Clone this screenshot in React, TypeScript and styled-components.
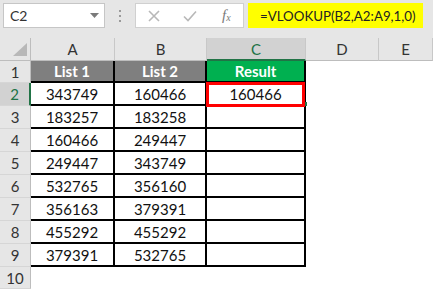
import React from "react";
import styled, { createGlobalStyle, css } from "styled-components";

const GlobalStyle = createGlobalStyle`
  html, body { margin: 0; padding: 0; background: #ffffff; overflow: hidden; }
  body { font-family: Lato, "Open Sans", sans-serif; }
`;

const Page = styled.div`
  width: 433px;
  height: 289px;
  display: flex;
  flex-direction: column;
  overflow: hidden;
  background: #ffffff;
`;

const Toolbar = styled.div`
  height: 38px;
  flex: none;
  box-sizing: border-box;
  background: #e6e6e6;
  display: flex;
  align-items: flex-start;
  padding: 3px 10px 0 3px;
`;

const NameBox = styled.div`
  width: 102px;
  height: 25px;
  box-sizing: border-box;
  background: #fff;
  border: 1px solid #c6c6c6;
  display: flex;
  align-items: center;
  justify-content: space-between;
  padding: 0 5px 0 6px;
  font-size: 14px;
  color: #333;
`;

const Dots = styled.div`
  width: 30px;
  height: 25px;
  display: flex;
  flex-direction: column;
  align-items: center;
  justify-content: center;
  gap: 3px;
  span {
    width: 2px;
    height: 2px;
    background: #9a9a9a;
  }
`;

const FxGroup = styled.div`
  width: 109px;
  height: 25px;
  box-sizing: border-box;
  background: #fff;
  border: 1px solid #d0d0d0;
  display: flex;
  align-items: center;
  padding-left: 12px;
  gap: 23px;
  color: #b4b4b4;
`;

const FxText = styled.span`
  font-family: "Liberation Serif", serif;
  font-style: italic;
  font-size: 15px;
  color: #7a7a7a;
  margin-left: 2px;
  sub {
    font-size: 10px;
    vertical-align: -1px;
  }
`;

const FormulaInput = styled.div`
  margin-left: 4px;
  flex: 1;
  height: 25px;
  background: #ffff00;
  display: flex;
  align-items: center;
  padding-left: 12px;
  font-size: 13.3px;
  color: #222;
`;

const Sheet = styled.div`
  flex: 1;
  display: grid;
  grid-template-columns: 31px 84px 92px 99px 73px 1fr;
  grid-template-rows: 23px 22px repeat(8, 23px) 22px;
  font-size: 15px;
`;

const Corner = styled.div`
  background: #e6e6e6;
  border-right: 1px solid #bdbdbd;
  border-bottom: 1px solid #bdbdbd;
  display: flex;
  align-items: flex-end;
  justify-content: flex-end;
  padding: 0 3px 4px 0;
  box-sizing: border-box;
`;

const ColHeader = styled.div<{ $active?: boolean }>`
  background: #e6e6e6;
  border-right: 1px solid #c8c8c8;
  border-bottom: 1px solid #bdbdbd;
  box-sizing: border-box;
  display: flex;
  align-items: center;
  justify-content: center;
  color: #333;
  ${(p) =>
    p.$active &&
    css`
      background: #d2d2d2;
      color: #217346;
      border-bottom: 2px solid #217346;
    `}
`;

const RowHeader = styled.div<{ $active?: boolean }>`
  background: #e6e6e6;
  border-right: 1px solid #bdbdbd;
  border-bottom: 1px solid #d6d6d6;
  box-sizing: border-box;
  display: flex;
  align-items: center;
  justify-content: center;
  color: #333;
  ${(p) =>
    p.$active &&
    css`
      background: #d2d2d2;
      color: #217346;
      border-right: 2px solid #217346;
    `}
`;

type Tone = "plain" | "gray" | "green" | "empty";

const Cell = styled.div<{ $tone: Tone; $selected?: boolean }>`
  position: relative;
  box-sizing: border-box;
  display: flex;
  align-items: center;
  justify-content: center;
  color: #111;
  background: #fff;
  border-right: 2px solid #000;
  border-bottom: 2px solid #000;
  ${(p) =>
    p.$selected &&
    css`
      z-index: 1;
    `}
  ${(p) =>
    p.$tone === "gray" &&
    css`
      background: #7f7f7f;
      color: #fff;
      font-weight: 700;
    `}
  ${(p) =>
    p.$tone === "green" &&
    css`
      background: #00b050;
      color: #fff;
      font-weight: 700;
    `}
  ${(p) =>
    p.$tone === "empty" &&
    css`
      border: none;
    `}
`;

const Highlight = styled.div`
  position: absolute;
  left: -1px;
  top: -1px;
  right: -1px;
  bottom: -3px;
  border: 3px solid #ff0000;
  z-index: 2;
  pointer-events: none;
`;

const FillHandle = styled.div`
  position: absolute;
  right: -3px;
  bottom: -2px;
  width: 4px;
  height: 4px;
  background: #217346;
  z-index: 1;
`;

const colA = [343749, 183257, 160466, 249447, 532765, 356163, 455292, 379391];
const colB = [160466, 183258, 249447, 343749, 356160, 379391, 455292, 532765];

export default function App() {
  return (
    <Page>
      <GlobalStyle />
      <Toolbar>
        <NameBox>
          <span>C2</span>
          <svg width="9" height="5" viewBox="0 0 9 5">
            <polygon points="0,0 9,0 4.5,5" fill="#7a7a7a" />
          </svg>
        </NameBox>
        <Dots>
          <span />
          <span />
          <span />
        </Dots>
        <FxGroup>
          <svg width="12" height="12" viewBox="0 0 12 12">
            <path d="M1 1 L11 11 M11 1 L1 11" stroke="#b8b8b8" strokeWidth="1.6" />
          </svg>
          <svg width="14" height="12" viewBox="0 0 14 12">
            <path d="M1 6.5 L5 10.5 L13 1.5" stroke="#b8b8b8" strokeWidth="1.6" fill="none" />
          </svg>
          <FxText>
            f<sub>x</sub>
          </FxText>
        </FxGroup>
        <FormulaInput>=VLOOKUP(B2,A2:A9,1,0)</FormulaInput>
      </Toolbar>
      <Sheet>
        <Corner>
          <svg width="14" height="13" viewBox="0 0 14 13">
            <polygon points="14,0 14,13 0,13" fill="#b8b8b8" />
          </svg>
        </Corner>
        <ColHeader>A</ColHeader>
        <ColHeader>B</ColHeader>
        <ColHeader $active>C</ColHeader>
        <ColHeader>D</ColHeader>
        <ColHeader>E</ColHeader>

        <RowHeader>1</RowHeader>
        <Cell $tone="gray">List 1</Cell>
        <Cell $tone="gray">List 2</Cell>
        <Cell $tone="green">Result</Cell>
        <Cell $tone="empty" />
        <Cell $tone="empty" />

        {colA.map((a, i) => (
          <React.Fragment key={i}>
            <RowHeader $active={i === 0}>{i + 2}</RowHeader>
            <Cell $tone="plain">{a}</Cell>
            <Cell $tone="plain">{colB[i]}</Cell>
            <Cell $tone="plain" $selected={i === 0}>
              {i === 0 && (
                <>
                  160466
                  <Highlight />
                  <FillHandle />
                </>
              )}
            </Cell>
            <Cell $tone="empty" />
            <Cell $tone="empty" />
          </React.Fragment>
        ))}

        <RowHeader>10</RowHeader>
        <Cell $tone="empty" />
        <Cell $tone="empty" />
        <Cell $tone="empty" />
        <Cell $tone="empty" />
        <Cell $tone="empty" />
      </Sheet>
    </Page>
  );
}
